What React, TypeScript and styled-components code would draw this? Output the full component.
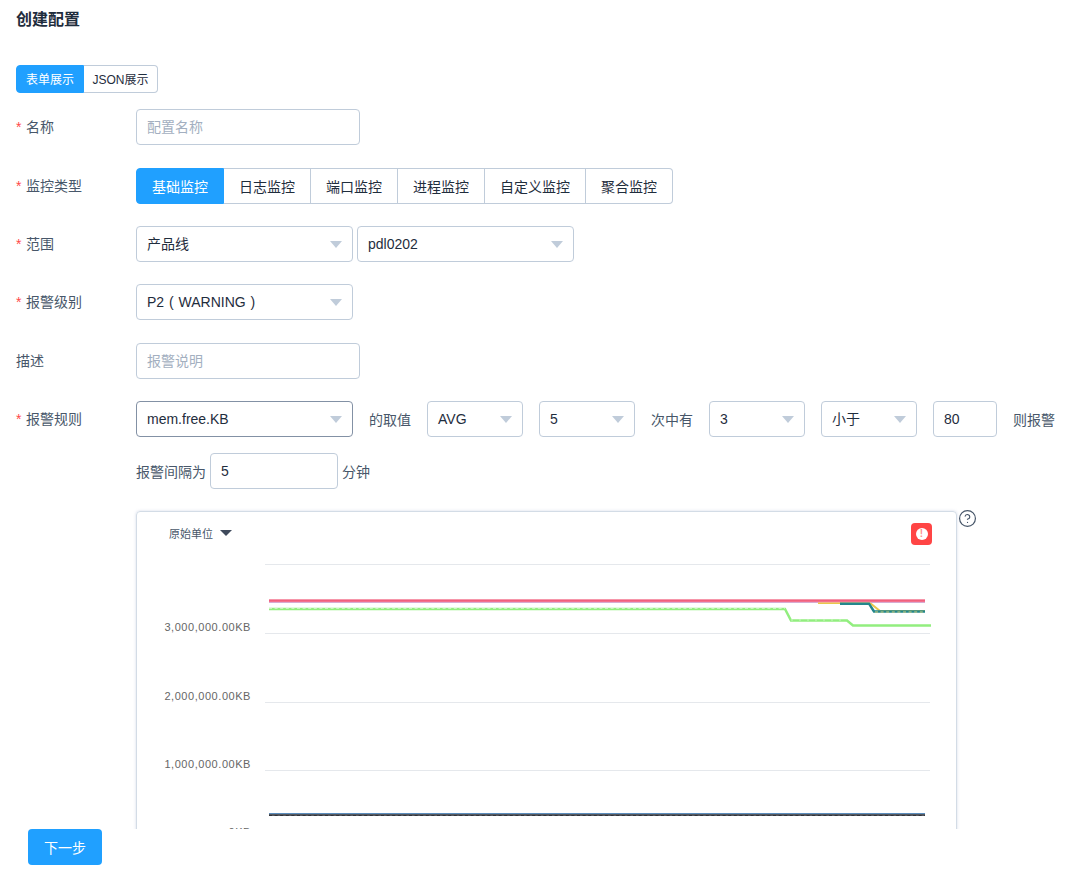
import { CircleHelp } from 'lucide-react';
import styled, { createGlobalStyle } from 'styled-components';

const GlobalStyle = createGlobalStyle`
  html, body {
    margin: 0;
    padding: 0;
    background: #fff;
  }
  body {
    font-family: "Liberation Sans", "Noto Sans CJK SC", sans-serif;
    font-size: 14px;
    color: #1f2d3d;
  }
  * {
    box-sizing: border-box;
  }
`;

const Page = styled.div`
  display: flex;
  flex-direction: column;
  height: 870px;
  overflow: hidden;
`;

const Main = styled.main`
  height: 829px;
  overflow: hidden;
  padding: 10px 16px 0;
`;

const Title = styled.h1`
  margin: 0 0 36px;
  font-size: 16px;
  line-height: 19px;
  font-weight: 700;
  color: #1f2d3d;
`;

const ViewToggle = styled.div`
  display: flex;
  width: 142px;
  height: 28px;
  margin-bottom: 16.4px;
`;

const ViewButton = styled.button<{ $active?: boolean }>`
  padding: 0 0 1px;
  font: inherit;
  font-size: 12px;
  flex: ${(p) => (p.$active ? '0 0 68px' : '1')};
  color: ${(p) => (p.$active ? '#fff' : '#1f2d3d')};
  background: ${(p) => (p.$active ? '#20a0ff' : '#fff')};
  border: 1px solid ${(p) => (p.$active ? '#20a0ff' : '#c0ccda')};
  border-left-width: ${(p) => (p.$active ? '1px' : '0')};
  border-radius: ${(p) => (p.$active ? '4px 0 0 4px' : '0 4px 4px 0')};
`;

const Row = styled.div`
  display: flex;
  align-items: flex-start;
  margin-bottom: 22.33px;
`;

const Label = styled.label<{ $required?: boolean }>`
  flex: 0 0 120px;
  height: 36px;
  line-height: 36px;
  color: #48576a;
  &::before {
    content: '*';
    display: ${(p) => (p.$required ? 'inline-block' : 'none')};
    width: 10px;
    color: #ff4949;
  }
`;

const Controls = styled.div`
  display: flex;
  flex-direction: column;
  gap: 16px;
`;

const ControlLine = styled.div`
  display: flex;
  align-items: center;
  height: 36px;
`;

const TextInput = styled.input<{ $width: number; $gap?: number }>`
  width: ${(p) => p.$width}px;
  height: 36px;
  margin: 0 ${(p) => p.$gap ?? 0}px;
  padding: 0 10px;
  font: inherit;
  color: #1f2d3d;
  border: 1px solid #c0ccda;
  border-radius: 4px;
  outline: none;
  &::placeholder {
    color: #a3afc0;
  }
`;

const SegmentGroup = styled.div`
  display: flex;
  height: 36px;
`;

const Segment = styled.button<{ $active?: boolean; $width: number }>`
  width: ${(p) => p.$width}px;
  padding: 0;
  font: inherit;
  color: ${(p) => (p.$active ? '#fff' : '#1f2d3d')};
  background: ${(p) => (p.$active ? '#20a0ff' : '#fff')};
  border: 1px solid ${(p) => (p.$active ? '#20a0ff' : '#c0ccda')};
  border-left-width: ${(p) => (p.$active ? '1px' : '0')};
  &:first-child {
    border-radius: 4px 0 0 4px;
  }
  &:last-child {
    border-radius: 0 4px 4px 0;
  }
`;

const SelectBox = styled.div<{ $width: number; $focused?: boolean; $gap?: number }>`
  position: relative;
  flex: 0 0 ${(p) => p.$width}px;
  height: 36px;
  margin-right: ${(p) => p.$gap ?? 0}px;
  padding: 0 30px 0 10px;
  line-height: 34px;
  word-spacing: 1px;
  color: #1f2d3d;
  border: 1px solid ${(p) => (p.$focused ? '#8391a5' : '#c0ccda')};
  border-radius: 4px;
  &::after {
    content: '';
    position: absolute;
    right: 10px;
    top: 14px;
    border-left: 6px solid transparent;
    border-right: 6px solid transparent;
    border-top: 7px solid #c0ccda;
  }
`;

const InlineText = styled.span<{ $gap?: number }>`
  flex: none;
  margin: 0 ${(p) => p.$gap ?? 0}px;
  color: #48576a;
`;

const ChartRow = styled.div`
  display: flex;
  align-items: flex-start;
  gap: 1px;
  margin: -0.4px 0 0 120px;
`;

const ChartCard = styled.section`
  position: relative;
  flex: 0 0 821px;
  height: 420px;
  border: 1px solid #d3dce6;
  border-radius: 4px;
  box-shadow: 0 0 3px rgba(131, 145, 190, 0.35);
`;

const UnitPicker = styled.div`
  position: absolute;
  left: 32px;
  top: 15px;
  display: flex;
  align-items: center;
  gap: 7px;
  font-size: 11px;
  line-height: 15px;
  color: #48576a;
  &::after {
    content: '';
    border-left: 6px solid transparent;
    border-right: 6px solid transparent;
    border-top: 6px solid #3f4a5c;
    margin-top: -3px;
  }
`;

const AlertBadge = styled.div`
  position: absolute;
  left: 774px;
  top: 11px;
  display: flex;
  align-items: center;
  justify-content: center;
  width: 21px;
  height: 22px;
  background: #ff4545;
  border-radius: 4px;
`;

const AlertDot = styled.span`
  width: 12px;
  height: 12px;
  border-radius: 50%;
  background: #fff;
  color: #ff8f8f;
  font-size: 10px;
  font-weight: 700;
  line-height: 12px;
  text-align: center;
`;

const ChartSvg = styled.svg`
  display: block;
`;

const HelpIcon = styled(CircleHelp)`
  flex: none;
  margin-top: -2px;
  color: #475669;
`;

const Footer = styled.footer`
  flex: none;
  height: 41px;
  padding-left: 28px;
  background: #fff;
`;

const NextButton = styled.button`
  width: 74px;
  height: 36px;
  padding: 0;
  font: inherit;
  color: #fff;
  background: #20a0ff;
  border: none;
  border-radius: 4px;
`;

const segments = [
  { name: '基础监控', width: 88 },
  { name: '日志监控', width: 87 },
  { name: '端口监控', width: 87 },
  { name: '进程监控', width: 87 },
  { name: '自定义监控', width: 101 },
  { name: '聚合监控', width: 87 },
];

const gridLines = [52, 121, 190, 258, 327];

const axisLabels = [
  { text: '3,000,000.00KB', y: 119 },
  { text: '2,000,000.00KB', y: 188 },
  { text: '1,000,000.00KB', y: 256 },
  { text: '0KB', y: 324 },
];

// coordinates are relative to the card's inner box
const greenPoints = '132,97 648,97 654,108.5 710,108.5 716,113.5 794,113.5';
const series = [
  { color: '#92ee7f', width: 2.5, points: greenPoints },
  { color: '#c9f6bf', width: 1, points: '132,96.5 648,96.5', dash: '3 2.6' },
  { color: '#c9f6bf', width: 1, points: '654,108 710,108', dash: '2 6' },
  { color: '#b3aeec', width: 1, points: '132,90.5 788,90.5' },
  { color: '#e9c84a', width: 2, points: '681,91 733,91 743,99 788,99' },
  { color: '#f9a8b8', width: 3.5, points: '132,88.7 788,88.7' },
  { color: '#f0607f', width: 2, points: '132,88.7 788,88.7' },
  { color: '#23878c', width: 2.5, points: '703,91.7 732,91.7 737,99.5 788,99.5' },
  { color: '#d8d27a', width: 1, points: '738,100 788,100', dash: '3 2.6' },
  { color: '#5b8dbd', width: 1, points: '132,301.5 788,301.5' },
  { color: '#53575e', width: 2, points: '132,303 788,303' },
  { color: '#2f333a', width: 1, points: '132,303.5 788,303.5', dash: '3 2.6' },
];

const App = () => {
  return (
    <Page>
      <GlobalStyle />
      <Main>
        <Title>创建配置</Title>
        <ViewToggle>
          <ViewButton $active>表单展示</ViewButton>
          <ViewButton>JSON展示</ViewButton>
        </ViewToggle>

        <Row>
          <Label $required>名称</Label>
          <TextInput $width={224} placeholder="配置名称" />
        </Row>

        <Row>
          <Label $required>监控类型</Label>
          <SegmentGroup>
            {segments.map((s, i) => (
              <Segment key={s.name} $active={i === 0} $width={s.width}>
                {s.name}
              </Segment>
            ))}
          </SegmentGroup>
        </Row>

        <Row>
          <Label $required>范围</Label>
          <ControlLine>
            <SelectBox $width={217} $gap={4}>产品线</SelectBox>
            <SelectBox $width={217}>pdl0202</SelectBox>
          </ControlLine>
        </Row>

        <Row>
          <Label $required>报警级别</Label>
          <SelectBox $width={217}>P2 ( WARNING )</SelectBox>
        </Row>

        <Row>
          <Label>描述</Label>
          <TextInput $width={224} placeholder="报警说明" />
        </Row>

        <Row>
          <Label $required>报警规则</Label>
          <Controls>
            <ControlLine>
              <SelectBox $width={217} $focused>mem.free.KB</SelectBox>
              <InlineText $gap={16}>的取值</InlineText>
              <SelectBox $width={96} $gap={16}>AVG</SelectBox>
              <SelectBox $width={96}>5</SelectBox>
              <InlineText $gap={16}>次中有</InlineText>
              <SelectBox $width={96} $gap={16}>3</SelectBox>
              <SelectBox $width={96} $gap={16}>小于</SelectBox>
              <TextInput $width={64} defaultValue="80" />
              <InlineText $gap={16}>则报警</InlineText>
            </ControlLine>
            <ControlLine>
              <InlineText>报警间隔为</InlineText>
              <TextInput $width={128} $gap={4} defaultValue="5" />
              <InlineText>分钟</InlineText>
            </ControlLine>
          </Controls>
        </Row>

        <ChartRow>
          <ChartCard>
            <UnitPicker>原始单位</UnitPicker>
            <AlertBadge>
              <AlertDot>!</AlertDot>
            </AlertBadge>
            <ChartSvg width="819" height="418">
              {gridLines.map((y) => (
                <line key={y} x1="128" x2="793" y1={y + 0.5} y2={y + 0.5} stroke="#e5e8ec" />
              ))}
              {axisLabels.map((l) => (
                <text
                  key={l.text}
                  x="114"
                  y={l.y}
                  textAnchor="end"
                  fontSize="11"
                  letterSpacing="0.55"
                  fill="#666"
                >
                  {l.text}
                </text>
              ))}
              {series.map((s) => (
                <polyline
                  key={s.points + s.color}
                  points={s.points}
                  fill="none"
                  stroke={s.color}
                  strokeWidth={s.width}
                  strokeDasharray={s.dash}
                />
              ))}
            </ChartSvg>
          </ChartCard>
          <HelpIcon size={19} strokeWidth={1.5} />
        </ChartRow>
      </Main>
      <Footer>
        <NextButton>下一步</NextButton>
      </Footer>
    </Page>
  );
};

export default App;
